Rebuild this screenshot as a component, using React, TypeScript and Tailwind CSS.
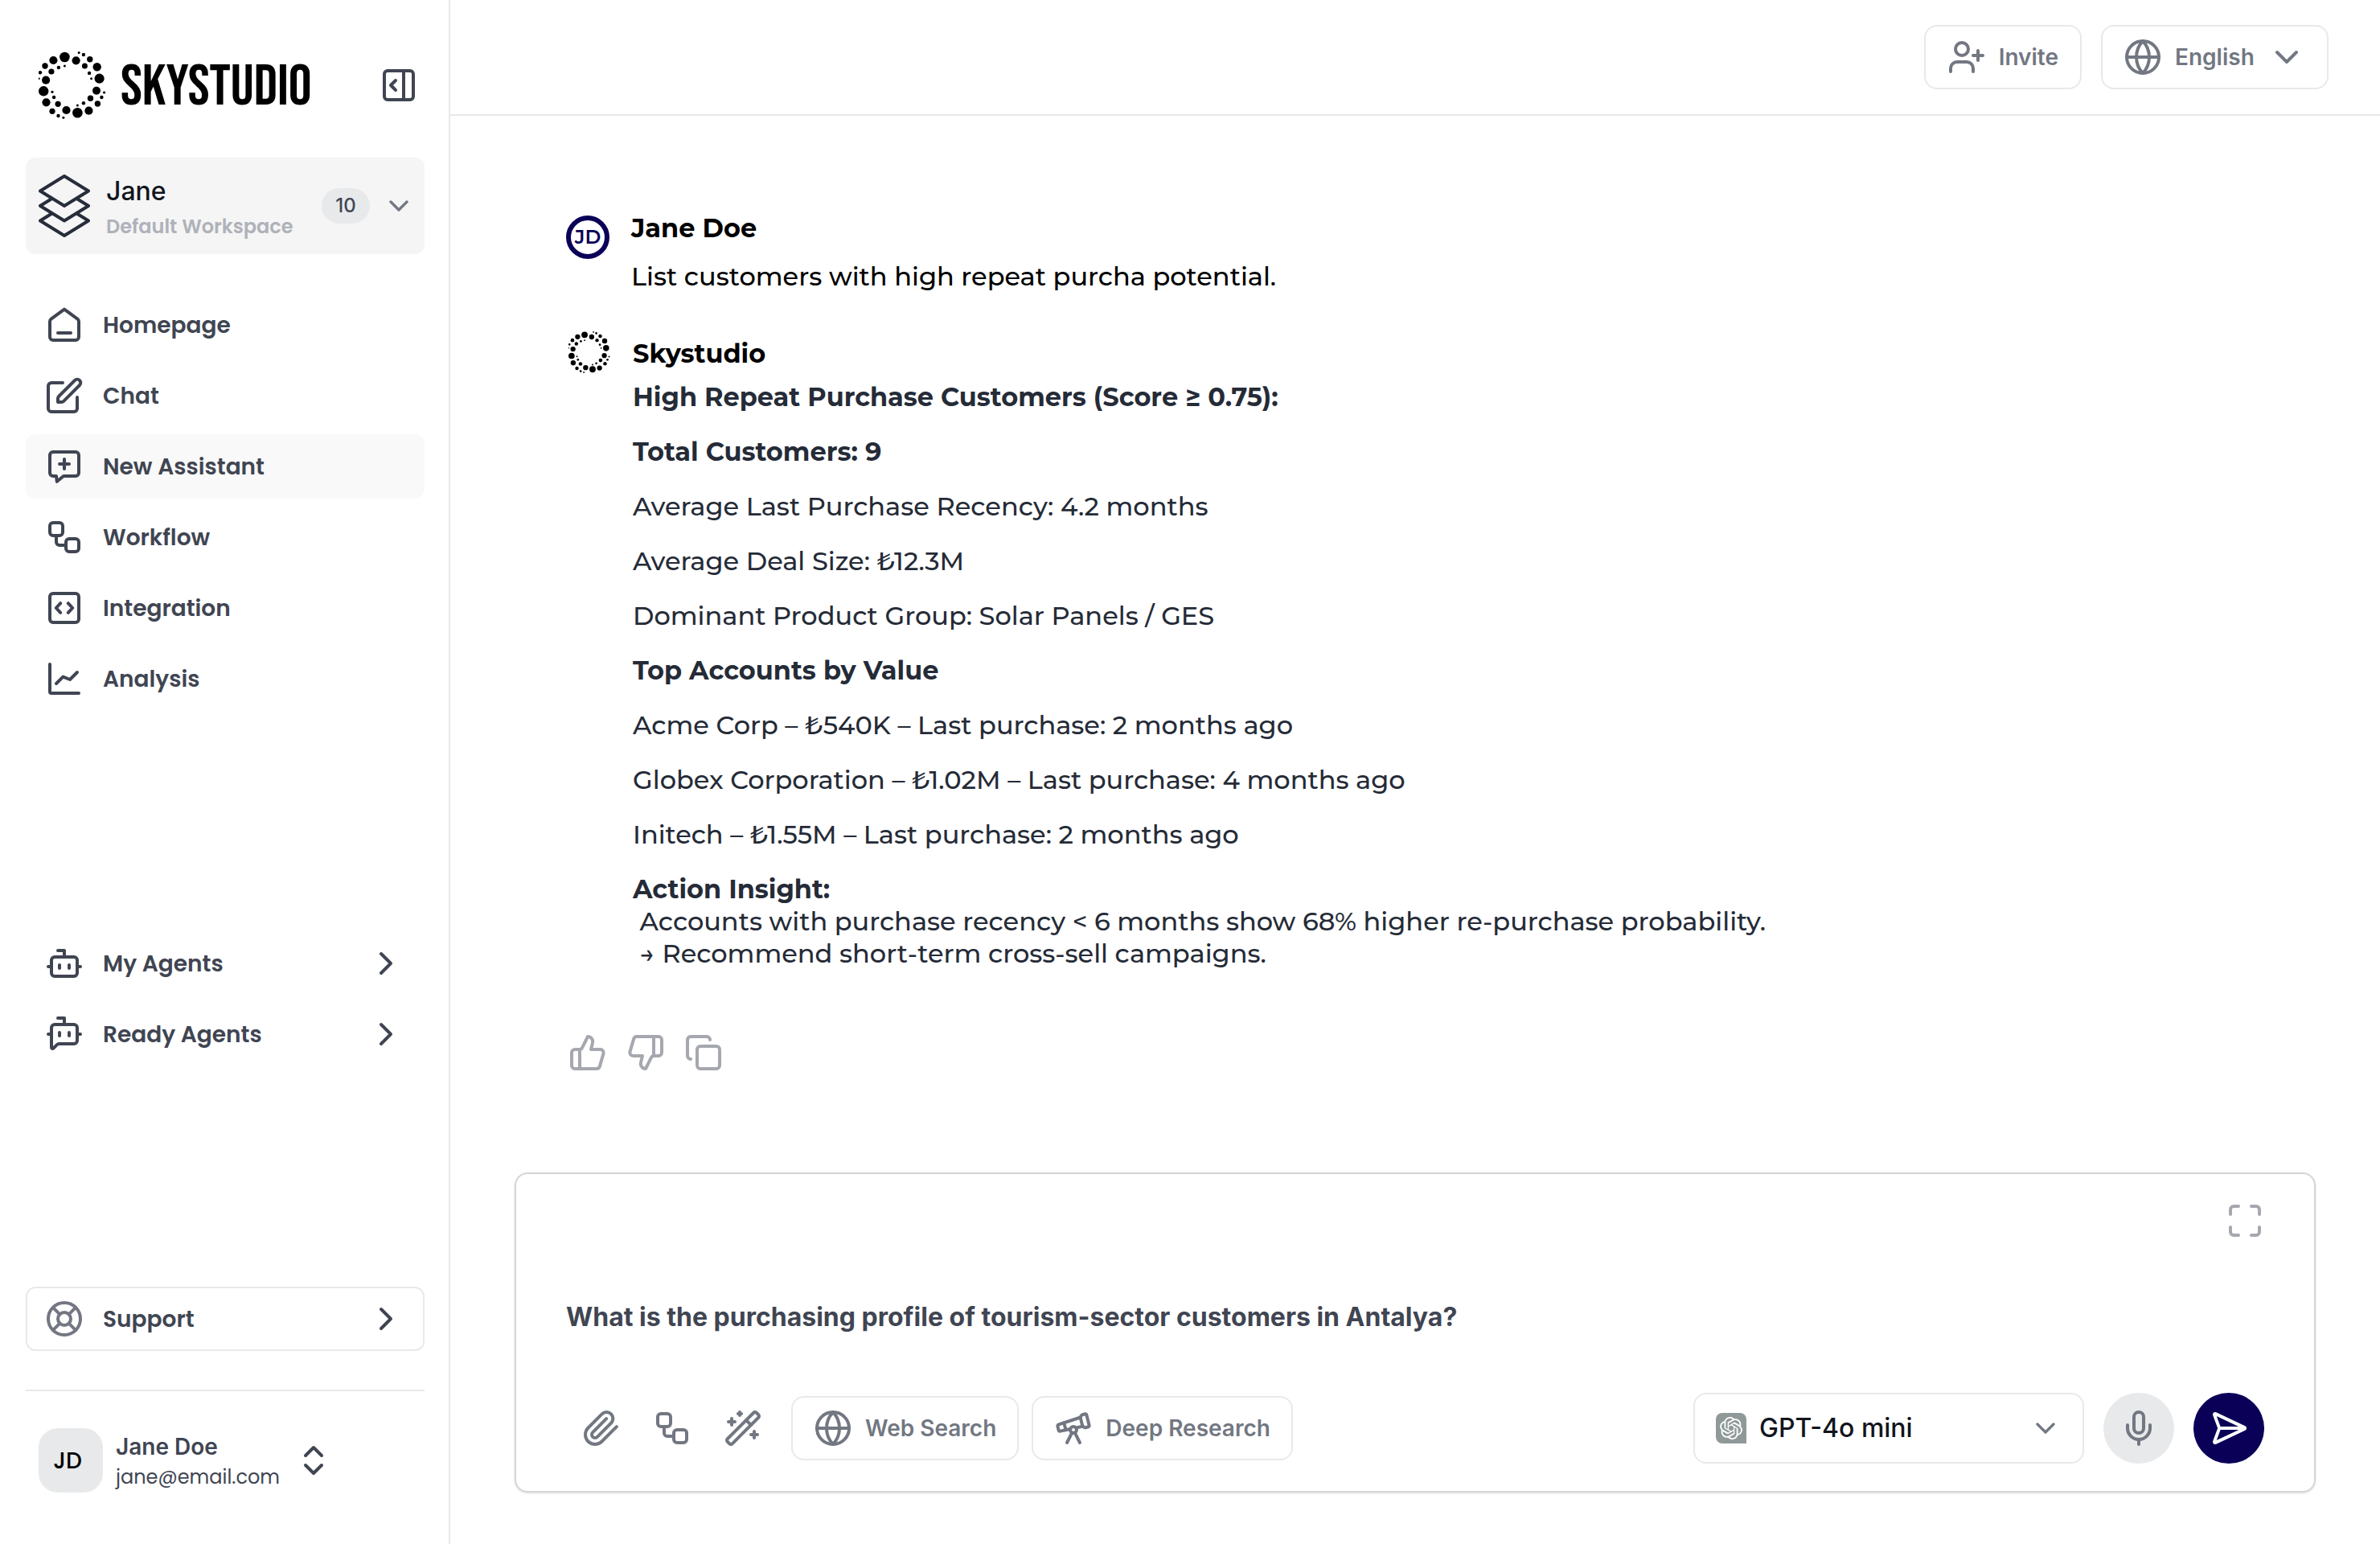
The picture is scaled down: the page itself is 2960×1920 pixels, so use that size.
import type { ReactNode } from 'react'
import {
  Bot,
  BotMessageSquare,
  ChevronDown,
  ChevronRight,
  ChevronsUpDown,
  Copy,
  Globe,
  LifeBuoy,
  Maximize,
  Mic,
  PanelRightOpen,
  SendHorizontal,
  Telescope,
  ThumbsDown,
  ThumbsUp,
  UserPlus,
  WandSparkles,
  Workflow,
} from 'lucide-react'
import { SiOpenai } from 'react-icons/si'

// [cx, cy, r] of every dot in the brand ring
const RING_DOTS = [
  [32.4, 7, 6.3], [46.6, 11.3, 5.1], [55.9, 4, 2.2], [50.2, 1.5, 1.5], [63.8, 9.7, 3.7],
  [57.4, 18, 3.5], [72.7, 19.3, 5.2], [63.1, 27, 2.2], [75.6, 33.7, 6.1], [65.6, 33.7, 1.5],
  [72, 48.7, 5], [81.6, 51, 1.6], [78.4, 57, 2.2], [64.5, 58.3, 3.7], [73.4, 65, 3.7],
  [55.9, 64.3, 2.2], [48.4, 67, 1.5], [62.4, 73.7, 5.1], [48.4, 76.3, 6.3], [34.5, 73, 5.1],
  [30.9, 82.3, 1.5], [24.5, 80, 2.2], [24.1, 65.3, 3.6], [17, 74.3, 3.6], [9.5, 63.3, 5.1],
  [19.1, 57, 2.2], [17, 50.3, 1.6], [6.2, 49.3, 6.2], [9.1, 35.7, 5.1], [0.5, 33.7, 1.2],
  [2, 26.3, 2.2], [15.9, 25, 3.6], [8, 18, 3.7], [24.9, 20, 2.2], [32.4, 18, 1.5],
  [18.4, 11, 5.1],
]

function RingLogo({ className }: { className: string }) {
  return (
    <svg viewBox="0 0 84 84" className={className} fill="black" aria-hidden="true">
      {RING_DOTS.map(([cx, cy, r]) => (
        <circle key={`${cx}-${cy}`} cx={cx} cy={cy} r={r} />
      ))}
    </svg>
  )
}

function StrokeIcon({ children }: { children: ReactNode }) {
  return (
    <svg
      viewBox="0 0 24 24"
      className="size-12 shrink-0"
      fill="none"
      stroke="currentColor"
      strokeWidth="2"
      strokeLinecap="round"
      strokeLinejoin="round"
      aria-hidden="true"
    >
      {children}
    </svg>
  )
}

function LayersIcon() {
  return (
    <svg
      viewBox="0 0 64 80"
      className="h-20 w-16 shrink-0"
      fill="none"
      stroke="#272d3a"
      strokeWidth="4"
      strokeLinecap="round"
      strokeLinejoin="round"
      aria-hidden="true"
    >
      <path d="M32 3 62 21.5 32 40 2 21.5z" />
      <path d="M16.5 31 2 40l30 18.5L62 40l-14.5-9" />
      <path d="M16.5 49.5 2 58.5 32 77l30-18.5-14.5-9" />
    </svg>
  )
}

const navItems = [
  {
    label: 'Homepage',
    icon: (
      <StrokeIcon>
        <path d="m12 2.300 8.200 6a2 2 0 0 1 .8 1.600V19.500a2 2 0 0 1-2 2H5a2 2 0 0 1-2-2V9.900a2 2 0 0 1 .8-1.600z" />
        <path d="M8 17h8" />
      </StrokeIcon>
    ),
  },
  {
    label: 'Chat',
    icon: (
      <StrokeIcon>
        <path d="M11 4H4a2 2 0 0 0-2 2v14a2 2 0 0 0 2 2h14a2 2 0 0 0 2-2v-7" />
        <path d="M18.5 2.5a2.121 2.121 0 0 1 3 3l-9.900 9.900a2 2 0 0 1-1.400.6H8v-2.200a2 2 0 0 1 .6-1.400z" />
      </StrokeIcon>
    ),
  },
  {
    label: 'New Assistant',
    active: true,
    icon: (
      <StrokeIcon>
        <path d="M5 3h14a2 2 0 0 1 2 2v11a2 2 0 0 1-2 2h-7.500l-4.100 3.400L7 18H5a2 2 0 0 1-2-2V5a2 2 0 0 1 2-2z" />
        <path d="M12 7.500v6M9 10.500h6" />
      </StrokeIcon>
    ),
  },
  { label: 'Workflow', icon: <Workflow className="size-12" /> },
  {
    label: 'Integration',
    icon: (
      <StrokeIcon>
        <rect x="3" y="3" width="18" height="18" rx="2" />
        <path d="m9.600 9.100-2.700 2.900 2.700 2.900M14.400 9.100l2.700 2.900-2.700 2.900" />
      </StrokeIcon>
    ),
  },
  {
    label: 'Analysis',
    icon: (
      <StrokeIcon>
        <path d="M3 3v17a1 1 0 0 0 1 1h17" />
        <path d="m7 15 4.200-4.200L15.500 12.500 20 8" />
      </StrokeIcon>
    ),
  },
]

const agentItems = [
  { label: 'My Agents', icon: <Bot className="size-12" /> },
  { label: 'Ready Agents', icon: <BotMessageSquare className="size-12" /> },
]

const answerLines = [
  { text: 'High Repeat Purchase Customers (Score ≥ 0.75):', bold: true },
  { text: 'Total Customers: 9', bold: true },
  { text: 'Average Last Purchase Recency: 4.2 months' },
  { text: 'Average Deal Size: ₺12.3M' },
  { text: 'Dominant Product Group: Solar Panels / GES' },
  { text: 'Top Accounts by Value', bold: true },
  { text: 'Acme Corp – ₺540K – Last purchase: 2 months ago' },
  { text: 'Globex Corporation – ₺1.02M – Last purchase: 4 months ago' },
  { text: 'Initech – ₺1.55M – Last purchase: 2 months ago' },
]

function Sidebar() {
  return (
    <aside className="flex w-[560px] shrink-0 flex-col border-r-2 border-[#e8e8e9] pt-16 pr-[30px] pb-16 pl-8 font-['Poppins','Inter',sans-serif] text-[28px] leading-10 font-semibold text-[#404552]">
      <div className="flex h-[84px] items-center pr-2 pl-4">
        <RingLogo className="size-[84px] shrink-0" />
        <span className="ml-[18px] pt-1.5 font-['Bebas_Neue','Oswald','Liberation_Sans_Narrow','Liberation_Sans',sans-serif] text-[72px] leading-[80px] font-normal text-black">
          SKYSTUDIO
        </span>
        <button type="button" aria-label="Collapse sidebar" className="ml-auto">
          <PanelRightOpen className="size-12" />
        </button>
      </div>

      <button type="button" className="mt-12 flex h-[120px] shrink-0 items-center rounded-xl bg-[#f5f5f6] pr-3 pl-4 text-left">
        <LayersIcon />
        <span className="ml-5 flex flex-col pt-2">
          <span className="font-['Inter',sans-serif] text-[32px] leading-10 font-medium text-[#12151c]">Jane</span>
          <span className="mt-1 text-[24px] leading-10 text-[#afb2b8]">Default Workspace</span>
        </span>
        <span className="ml-auto flex h-11 w-15 items-center justify-center rounded-full bg-[#e8e9eb] font-['Inter',sans-serif] text-[24px] font-medium">
          10
        </span>
        <ChevronDown className="ml-4 size-10 text-[#727782]" />
      </button>

      <div className="mt-12 flex flex-1 flex-col justify-between">
        <nav className="flex flex-col gap-2">
          {navItems.map((item) => (
            <a
              key={item.label}
              href="#"
              className={
                item.active
                  ? 'flex h-20 items-center gap-6 rounded-xl bg-[#f9f9f9] px-6'
                  : 'flex h-20 items-center gap-6 rounded-xl px-6'
              }
            >
              {item.icon}
              <span className="pt-0.5">{item.label}</span>
            </a>
          ))}
        </nav>

        <div className="flex flex-col gap-2">
          {agentItems.map((item) => (
            <button key={item.label} type="button" className="flex h-20 items-center gap-6 px-6">
              {item.icon}
              <span className="pt-0.5">{item.label}</span>
              <ChevronRight className="ml-auto size-12" />
            </button>
          ))}
        </div>

        <button
          type="button"
          className="flex h-20 items-center gap-6 rounded-xl border-2 border-[#e9e9ea] px-[22px]"
        >
          <LifeBuoy className="size-12 text-[#727782]" />
          <span className="pt-0.5">Support</span>
          <ChevronRight className="ml-auto size-12" />
        </button>
      </div>

      <div className="mt-12 border-t-2 border-[#e8e8e9] pt-[46px]">
        <button type="button" className="flex items-center pl-4 text-left">
          <span className="flex size-20 items-center justify-center rounded-3xl bg-[#e8e9eb] pt-0.5 pr-2 font-medium text-black">
            JD
          </span>
          <span className="ml-4 flex flex-col pt-0.5">
            <span className="font-['Inter',sans-serif]">Jane Doe</span>
            <span className="text-[24px] leading-9 font-normal">jane@email.com</span>
          </span>
          <ChevronsUpDown className="ml-[18px] size-12" />
        </button>
      </div>
    </aside>
  )
}

function Header() {
  return (
    <header className="flex h-36 shrink-0 items-center justify-end gap-6 border-b-2 border-[#e8e8e9] px-16 text-[28px] leading-10 font-semibold text-[#727782]">
      <button type="button" className="flex h-20 items-center gap-4 rounded-2xl border-2 border-[#e9e9ea] px-[27px]">
        <UserPlus className="size-12" />
        Invite
      </button>
      <div className="flex h-20 items-center gap-4 rounded-2xl border-2 border-[#e9e9ea] px-[26px]">
        <Globe className="size-12" />
        <select aria-label="Language" className="appearance-none bg-transparent outline-none">
          <option>English</option>
        </select>
        <ChevronDown className="size-12" />
      </div>
    </header>
  )
}

function Conversation() {
  return (
    <div className="flex-1 px-36 pt-[120px] font-['Montserrat','Inter','Noto_Sans',sans-serif] text-[32px] leading-10 font-medium text-[#252b37]">
      <div className="flex gap-[27px] text-black">
        <span className="mt-1 flex size-[54px] shrink-0 items-center justify-center rounded-full border-[6px] border-[#0b0057] text-[24px] font-semibold text-[#0b0057]">
          JD
        </span>
        <div>
          <p className="font-bold">Jane Doe</p>
          <p className="mt-5">List customers with high repeat purcha potential.</p>
        </div>
      </div>

      <div className="mt-14 flex gap-7">
        <div className="-mt-2 flex w-[55px] shrink-0 items-start justify-end">
          <RingLogo className="size-[52px]" />
        </div>
        <div>
          <p className="font-bold text-black">Skystudio</p>
          <div className="mt-[14px] flex flex-col gap-7">
            {answerLines.map((line) => (
              <p key={line.text} className={line.bold ? 'font-bold' : ''}>
                {line.text}
              </p>
            ))}
            <p className="whitespace-pre-wrap">
              <strong>Action Insight:</strong>
              {'\n Accounts with purchase recency < 6 months show 68% higher re-purchase probability.'}
              {'\n → Recommend short-term cross-sell campaigns.'}
            </p>
          </div>
        </div>
      </div>

      <div className="mt-[79px] flex gap-6 pl-[3px] text-[#a5a8ae]">
        <button type="button" aria-label="Good response">
          <ThumbsUp className="size-12" />
        </button>
        <button type="button" aria-label="Bad response">
          <ThumbsDown className="size-12" />
        </button>
        <button type="button" aria-label="Copy">
          <Copy className="size-12" />
        </button>
      </div>
    </div>
  )
}

function Composer() {
  return (
    <form className="mx-20 mb-16 flex flex-col rounded-2xl border-2 border-[#d5d5d7] px-[62px] py-[34px] shadow-sm">
      <button type="button" aria-label="Expand" className="self-end text-[#a5a8ae]">
        <Maximize className="size-12" />
      </button>
      <textarea
        aria-label="Message"
        className="h-[190px] w-full resize-none pt-[76px] text-[32px] leading-10 font-bold text-[#404552] outline-none"
        defaultValue="What is the purchasing profile of tourism-sector customers in Antalya?"
      />
      <div className="flex items-center text-[28px] leading-10 font-semibold text-[#727782]">
        <div className="flex gap-10 pl-5">
          <button type="button" aria-label="Attach file">
            <StrokeIcon>
              <path d="m21.440 11.050-9.190 9.190a6 6 0 0 1-8.490-8.490l8.570-8.570A4 4 0 1 1 18 8.840l-8.590 8.570a2 2 0 0 1-2.830-2.830l8.490-8.480" />
            </StrokeIcon>
          </button>
          <button type="button" aria-label="Workflow">
            <Workflow className="size-12" />
          </button>
          <button type="button" aria-label="Improve prompt">
            <WandSparkles className="size-12" />
          </button>
        </div>
        <div className="ml-9 flex gap-4">
          <button type="button" className="flex h-20 items-center gap-4 rounded-2xl border-2 border-[#e9e9ea] px-[26px]">
            <Globe className="size-12" />
            Web Search
          </button>
          <button type="button" className="flex h-20 items-center gap-4 rounded-2xl border-2 border-[#e9e9ea] px-[26px]">
            <Telescope className="size-12" />
            Deep Research
          </button>
        </div>

        <div className="ml-auto flex items-center gap-6">
          <div className="flex h-[88px] w-[486px] items-center rounded-2xl border-2 border-[#e9e9ea] px-[26px]">
            <span className="flex size-[38px] shrink-0 items-center justify-center rounded-lg rounded-br-none bg-[#909999] text-white">
              <SiOpenai className="size-7" />
            </span>
            <select
              aria-label="Model"
              className="ml-4 flex-1 appearance-none bg-transparent text-[32px] font-medium text-[#12151c] outline-none"
            >
              <option>GPT-4o mini</option>
            </select>
            <ChevronDown className="size-10" />
          </div>
          <button
            type="button"
            aria-label="Voice input"
            className="flex size-22 items-center justify-center rounded-full bg-[#e8e9eb]"
          >
            <Mic className="size-12" />
          </button>
          <button
            type="submit"
            aria-label="Send"
            className="flex size-22 items-center justify-center rounded-full bg-[#0b0057] text-white"
          >
            <SendHorizontal className="size-12" />
          </button>
        </div>
      </div>
    </form>
  )
}

export default function App() {
  return (
    <div className="flex min-h-screen bg-white font-['Inter','Noto_Sans',sans-serif]">
      <Sidebar />
      <main className="flex min-w-0 flex-1 flex-col">
        <Header />
        <Conversation />
        <Composer />
      </main>
    </div>
  )
}
